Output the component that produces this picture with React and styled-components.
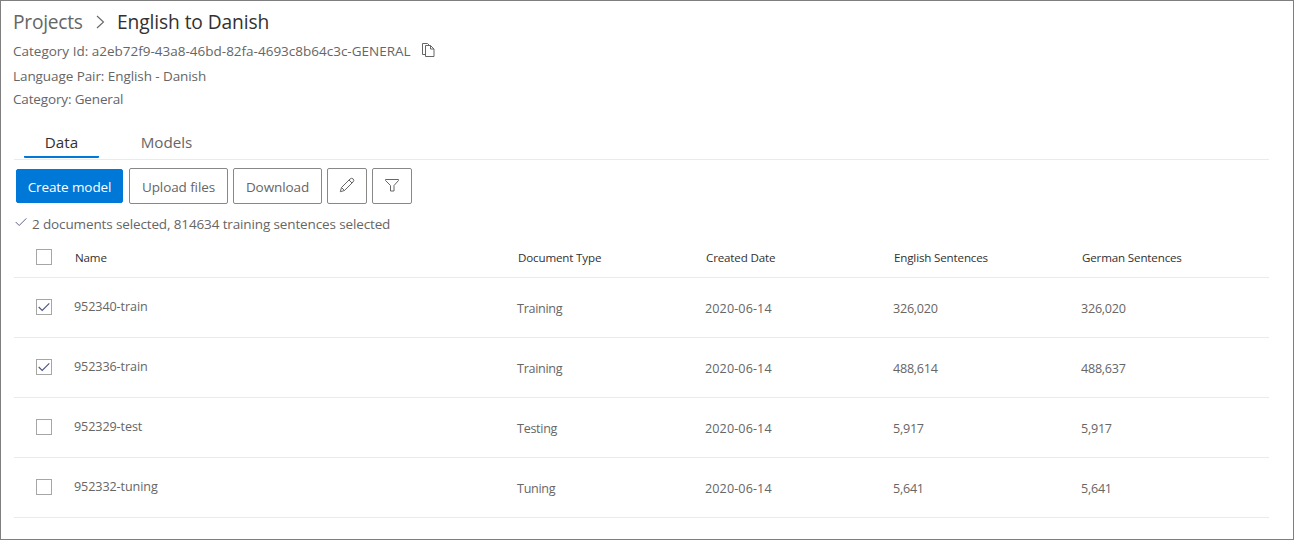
import React from "react";
import styled, { createGlobalStyle } from "styled-components";

const GlobalStyle = createGlobalStyle`
  *, *::before, *::after { box-sizing: border-box; }
  body { margin: 0; background: #fff; }
  button { font: inherit; }
`;

const Page = styled.main`
  display: flex;
  flex-direction: column;
  width: 1294px;
  height: 540px;
  padding: 7px 24px 0 13px;
  border: 1px solid #7f7f7f;
  background: #fff;
  color: #666;
  font-family: "Segoe UI", "Open Sans", "Noto Sans", sans-serif;
  font-size: 13.5px;
  white-space: nowrap;
`;

const Breadcrumb = styled.nav`
  display: flex;
  align-items: center;
  height: 28px;
  margin-left: -1px;
  font-size: 19.2px;
  line-height: 28px;
`;

const Crumb = styled.span`
  width: ${(p) => p.$width || "auto"};
  color: ${(p) => (p.$current ? "#323130" : "#666")};
  letter-spacing: ${(p) => p.$tracking || "0"};
`;

const Separator = styled.svg`
  width: 10px;
  height: 14px;
  margin-right: 11px;
`;

const Meta = styled.div`
  display: flex;
  align-items: center;
  height: ${(p) => p.$height}px;
  margin-left: -1px;
  letter-spacing: ${(p) => p.$tracking || "0"};
`;

const CopyIcon = styled.svg`
  width: 14px;
  height: 16px;
  margin: -2px 0 0 10px;
`;

const Tabs = styled.div`
  display: flex;
  height: 34px;
  margin-top: 15px;
  padding-left: 10px;
  border-bottom: 1px solid #eaeaea;
  font-size: 15.2px;
`;

const Tab = styled.div`
  display: flex;
  justify-content: center;
  width: 75px;
  height: 32px;
  margin-right: 30px;
  line-height: 32px;
  color: ${(p) => (p.$active ? "#323130" : "#666")};
  border-bottom: 2px solid ${(p) => (p.$active ? "#0078d7" : "transparent")};
  border-radius: 1px;
`;

const Toolbar = styled.div`
  display: flex;
  align-items: center;
  gap: 5px;
  height: 36px;
  margin: 8px 0 0 2px;
`;

const Button = styled.button`
  display: flex;
  align-items: center;
  justify-content: center;
  width: ${(p) => p.$width}px;
  height: ${(p) => (p.$primary ? 34 : 36)}px;
  margin-right: ${(p) => (p.$primary ? 1 : 0)}px;
  padding: 2px 0 0;
  border: 1px solid ${(p) => (p.$primary ? "#0078d7" : "#8a8886")};
  border-radius: 2px;
  background: ${(p) => (p.$primary ? "#0078d7" : "#fff")};
  color: ${(p) => (p.$primary ? "#fff" : "#666")};
  letter-spacing: -0.1px;
`;

const ToolIcon = styled.svg`
  width: 16px;
  height: 16px;
  margin-top: -4px;
`;

const Status = styled.div`
  display: flex;
  align-items: center;
  height: 34px;
  padding: 6px 0 0 1px;
  letter-spacing: -0.13px;
`;

const StatusCheck = styled.svg`
  width: 12px;
  height: 10px;
  margin: -5px 5px 0 0;
`;

const Table = styled.section`
  display: flex;
  flex-direction: column;
`;

const Row = styled.div`
  display: grid;
  grid-template-columns: 60px 443px 188px 188px 188px 1fr;
  align-items: center;
  height: ${(p) => (p.$header ? 40 : 60)}px;
  padding: 0 0 ${(p) => (p.$header ? 1 : 2)}px ${(p) => (p.$header ? 1 : 0)}px;
  border-bottom: 1px solid #eaeaea;
  color: ${(p) => (p.$header ? "#323130" : "#666")};
  font-size: ${(p) => (p.$header ? "11.6px" : "12.6px")};
`;

const Cell = styled.div`
  padding-top: ${(p) => p.$drop || 0}px;
  letter-spacing: ${(p) => p.$tracking || "0"};
`;

const Checkbox = styled.span`
  display: flex;
  align-items: center;
  justify-content: center;
  width: 16px;
  height: 16px;
  margin-left: ${(p) => (p.$header ? 21 : 22)}px;
  border: 1px solid #a6a6a6;
`;

const CheckMark = () => (
  <svg width="12" height="10" viewBox="0 0 12 10" fill="none" stroke="#4c5480" strokeWidth="1.1">
    <path d="M.7 5 4.2 8.5 11.3 1.4" />
  </svg>
);

const documents = [
  ["952340-train", "Training", "2020-06-14", "326,020", "326,020", true],
  ["952336-train", "Training", "2020-06-14", "488,614", "488,637", true],
  ["952329-test", "Testing", "2020-06-14", "5,917", "5,917", false],
  ["952332-tuning", "Tuning", "2020-06-14", "5,641", "5,641", false],
];

const headings = ["Name", "Document Type", "Created Date", "English Sentences", "German Sentences"];

export default function App() {
  return (
    <>
      <GlobalStyle />
      <Page>
        <Breadcrumb>
          <Crumb $width="83px" $tracking="-0.25px">Projects</Crumb>
          <Separator viewBox="0 0 10 14" fill="none" stroke="#666" strokeWidth="1.1">
            <path d="M1 1 7.5 7 1 13" />
          </Separator>
          <Crumb $current $tracking="-0.1px">English to Danish</Crumb>
        </Breadcrumb>
        <Meta $height={29}>
          <span>Category Id: a2eb72f9-43a8-46bd-82fa-4693c8b64c3c-GENERAL</span>
          <CopyIcon viewBox="0 0 14 16" fill="none" stroke="#666">
            <path d="M4.5 12.5h-3V1.5h5l2 2M4.5 3.5h5l3.500 3.500v7.500h-8.500zM9.500 3.500v3.500h3.500" />
          </CopyIcon>
        </Meta>
        <Meta $height={22} $tracking="-0.08px">Language Pair: English - Danish</Meta>
        <Meta $height={24} $tracking="-0.15px">Category: General</Meta>
        <Tabs>
          <Tab $active>Data</Tab>
          <Tab>Models</Tab>
        </Tabs>
        <Toolbar>
          <Button $primary $width={107}>Create model</Button>
          <Button $width={99}>Upload files</Button>
          <Button $width={89}>Download</Button>
          <Button $width={40} aria-label="Edit">
            <ToolIcon viewBox="0 0 16 16" fill="none" stroke="#666">
              <path d="M1.300 14.700 2.500 10.500 11 2Q12.600.600 14.100 1.900T14 5L5.500 13.500ZM10 3l3 3M2.500 10.500l3 3" />
            </ToolIcon>
          </Button>
          <Button $width={40} aria-label="Filter">
            <ToolIcon viewBox="0 0 16 16" fill="none" stroke="#666">
              <path d="M1.500 2.500h13v1L10 8.500v5.500H6.500V8.500L1.500 3.500z" />
            </ToolIcon>
          </Button>
        </Toolbar>
        <Status>
          <StatusCheck viewBox="0 0 12 10" fill="none" stroke="#5c6288">
            <path d="M.7 5 4.200 8.500 11.300 1.400" />
          </StatusCheck>
          2 documents selected, 814634 training sentences selected
        </Status>
        <Table>
          <Row $header>
            <Checkbox $header />
            {headings.map((h) => <Cell key={h} $tracking="-0.16px">{h}</Cell>)}
          </Row>
          {documents.map(([name, type, date, english, german, checked]) => (
            <Row key={name}>
              <Checkbox>{checked && <CheckMark />}</Checkbox>
              <Cell $tracking="-0.1px">{name}</Cell>
              <Cell $drop={3} $tracking="-0.3px">{type}</Cell>
              <Cell $drop={3} $tracking="0.1px">{date}</Cell>
              <Cell $drop={3} $tracking="-0.25px">{english}</Cell>
              <Cell $drop={3} $tracking="-0.25px">{german}</Cell>
            </Row>
          ))}
        </Table>
      </Page>
    </>
  );
}
